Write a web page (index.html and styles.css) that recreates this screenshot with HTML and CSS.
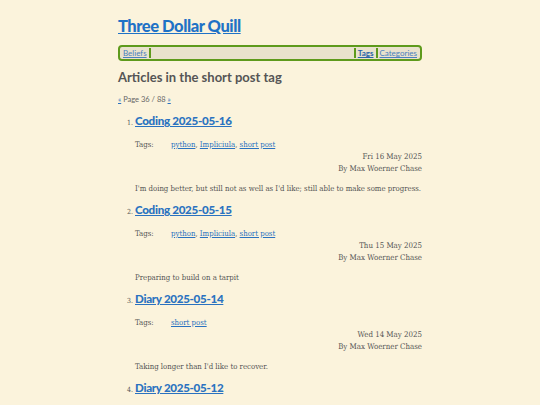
FILE: index.html
```html
<!DOCTYPE html>
<html lang="en">
<head>
<meta charset="utf-8">
<title>Three Dollar Quill</title>
<link rel="stylesheet" href="styles.css">
</head>
<body>
<div class="page">
  <h1 class="site-title"><a href="#">Three Dollar Quill</a></h1>
  <nav class="nav">
    <a class="nav-link" href="#">Beliefs</a><span class="sep"></span>
    <span class="nav-fill"></span>
    <span class="sep"></span><a class="nav-link current" href="#">Tags</a><span class="sep"></span><a class="nav-link" href="#">Categories</a>
  </nav>
  <h2 class="heading">Articles in the short post tag</h2>
  <p class="pager"><a href="#">«</a> Page 36 / 88 <a href="#">»</a></p>
  <ol class="articles">
    <li class="article">
      <h3 class="article-title"><a href="#">Coding 2025-05-16</a></h3>
      <div class="tags"><span class="tags-label">Tags:</span><span><a href="#">python</a>, <a href="#">Impliciula</a>, <a href="#">short post</a></span></div>
      <div class="meta">Fri 16 May 2025<br>By Max Woerner Chase</div>
      <p class="summary">I'm doing better, but still not as well as I'd like; still able to make some progress.</p>
    </li>
    <li class="article">
      <h3 class="article-title"><a href="#">Coding 2025-05-15</a></h3>
      <div class="tags"><span class="tags-label">Tags:</span><span><a href="#">python</a>, <a href="#">Impliciula</a>, <a href="#">short post</a></span></div>
      <div class="meta">Thu 15 May 2025<br>By Max Woerner Chase</div>
      <p class="summary">Preparing to build on a tarpit</p>
    </li>
    <li class="article">
      <h3 class="article-title"><a href="#">Diary 2025-05-14</a></h3>
      <div class="tags"><span class="tags-label">Tags:</span><span><a href="#">short post</a></span></div>
      <div class="meta">Wed 14 May 2025<br>By Max Woerner Chase</div>
      <p class="summary">Taking longer than I'd like to recover.</p>
    </li>
    <li class="article">
      <h3 class="article-title"><a href="#">Diary 2025-05-12</a></h3>
    </li>
  </ol>
</div>
</body>
</html>
```
FILE: styles.css
```css
html, body {
  margin: 0;
  padding: 0;
  background: #fbf3dc;
}
body {
  font-family: "DejaVu Serif Condensed", "DejaVu Serif", serif;
  color: #555;
  font-size: 7.75px;
}
a {
  color: #2a72c0;
}
.page {
  width: 304px;
  margin: 0 auto;
  padding-top: 15px;
}
.site-title {
  margin: 0;
  font-family: Lato, "Open Sans", sans-serif;
  font-weight: 900;
  font-size: 16.5px;
  letter-spacing: -0.45px;
  line-height: 22px;
}
.site-title a {
  color: #1f72c6;
}
.nav {
  margin-top: 8px;
  height: 12px;
  border: 2px solid #5e9a1c;
  border-radius: 4px;
  background: #e9e2cd;
  display: flex;
  align-items: center;
  padding: 0 2px;
  font-family: Lato, sans-serif;
  font-size: 8px;
}
.nav-link {
  color: #4a7fbf;
  padding: 0 1px;
}
.nav-link.current {
  font-weight: 700;
  color: #2a64a8;
}
.sep {
  width: 2px;
  height: 10px;
  background: #5e9a1c;
  margin: 0 1px;
}
.nav-fill {
  flex: 1;
}
.heading {
  margin: 8px 0 0;
  font-family: Lato, sans-serif;
  font-weight: 700;
  font-size: 13px;
  line-height: 16px;
  color: #555;
}
.pager {
  margin: 10px 0 0;
  font-family: Lato, sans-serif;
  font-size: 7.5px;
  line-height: 10px;
  color: #666;
}
.articles {
  margin: 4px 0 0;
  padding-left: 17px;
  font-size: 7px;
}
.article {
  margin-bottom: 3px;
}
.article-title {
  margin: 0;
  font-family: Lato, sans-serif;
  font-size: 11.6px;
  font-weight: 900;
  letter-spacing: -0.3px;
  line-height: 18px;
  padding-top: 3px;
}
.tags {
  display: flex;
  margin-top: 9px;
  font-size: 7.75px;
  line-height: 12px;
}
.tags-label {
  width: 36px;
}
.meta {
  text-align: right;
  font-size: 7.85px;
  line-height: 12px;
}
.summary {
  margin: 8px 0 0;
  font-size: 7.75px;
  line-height: 12px;
}
```
